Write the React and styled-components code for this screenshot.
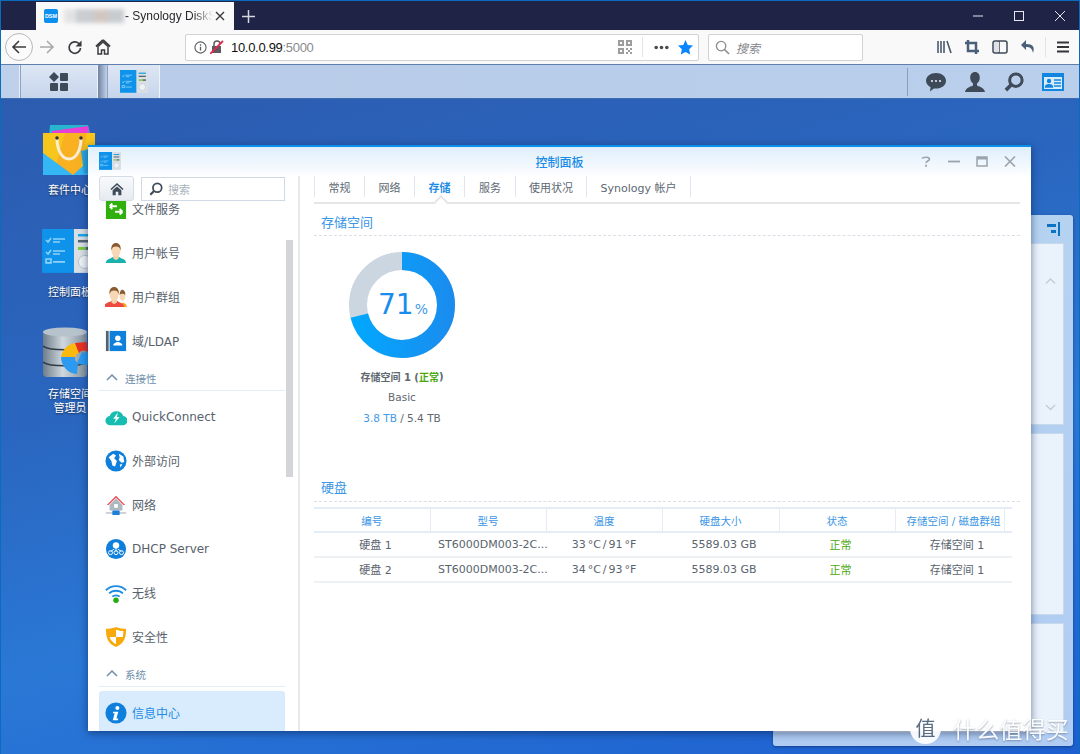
import React from 'react';
import styled, { createGlobalStyle } from 'styled-components';

const UI_FONT = '"DejaVu Sans", "Noto Sans CJK SC", sans-serif';
const CHROME_FONT = '"Liberation Sans", "Noto Sans CJK SC", sans-serif';

const Global = createGlobalStyle`
    html, body { margin: 0; padding: 0; background: #2a64b8; }
    * { box-sizing: border-box; }
`;

const Frame = styled.div`
    width: 1080px;
    height: 754px;
    display: flex;
    flex-direction: column;
    overflow: hidden;
    border: 1px solid #0a6cbd;
    border-bottom: 0;
    font-family: ${UI_FONT};
    position: relative;
`;

/* browser title bar */
const TitleBar = styled.div`
    height: 29px;
    flex: none;
    background: #1f2346;
    display: flex;
    align-items: flex-end;
    padding-left: 35px;
    position: relative;
`;
const BrowserTab = styled.div`
    width: 198px;
    height: 28px;
    background: #f9f9fa;
    display: flex;
    align-items: center;
    padding-left: 8px;
    font-family: ${CHROME_FONT};
    font-size: 12px;
    color: #2a2a2e;
`;
const Favicon = styled.div`
    width: 14px;
    height: 14px;
    border-radius: 2px;
    background: #0c8fee;
    color: #fff;
    font-size: 5.5px;
    font-weight: 700;
    font-family: ${CHROME_FONT};
    display: flex;
    align-items: center;
    justify-content: center;
    flex: none;
`;
const BlurTitle = styled.div`
    width: 60px;
    height: 14px;
    margin-left: 6px;
    flex: none;
    filter: blur(2px);
    background: linear-gradient(90deg, #dfdfe0 0 20%, #c2c6ca 20% 50%, #cbbfb8 50% 75%, #bfc4c8 75% 100%);
    opacity: 0.85;
`;
const TabTitle = styled.div`
    width: 88px;
    margin-left: 1px;
    white-space: nowrap;
    -webkit-mask-image: linear-gradient(90deg, #000 78%, transparent 100%);
    mask-image: linear-gradient(90deg, #000 78%, transparent 100%);
`;
const TabClose = styled.div`
    margin-left: 2px;
    display: flex;
`;
const NewTab = styled.div`
    margin-left: 8px;
    height: 28px;
    display: flex;
    align-items: center;
`;
const WindowButtons = styled.div`
    margin-left: auto;
    height: 28px;
    display: flex;
    align-items: center;
    gap: 31px;
    padding-right: 14px;
`;

/* browser toolbar */
const ToolBar = styled.div`
    height: 35px;
    flex: none;
    background: #f9f9fa;
    border-bottom: 1px solid #5f80ad;
    display: flex;
    align-items: center;
    padding-left: 4px;
`;
const BackButton = styled.div`
    width: 28px;
    height: 28px;
    border-radius: 50%;
    border: 1px solid #b8b8ba;
    background: #fbfbfb;
    display: flex;
    align-items: center;
    justify-content: center;
    flex: none;
`;
const NavIcon = styled.div`
    width: 28px;
    flex: none;
    display: flex;
    align-items: center;
    justify-content: center;
`;
const NavGroup = styled.div`
    display: flex;
    align-items: center;
    width: 180px;
    flex: none;
`;
const UrlBar = styled.div`
    width: 514px;
    height: 27px;
    flex: none;
    background: #fff;
    border: 1px solid #d2d2d4;
    border-radius: 2px;
    display: flex;
    align-items: center;
    padding: 0 5px 0 8px;
    font-family: ${CHROME_FONT};
    font-size: 13px;
    color: #111;
`;
const UrlText = styled.span`
    margin-left: 7px;
    letter-spacing: -0.3px;
`;
const UrlPort = styled.span`
    color: #8b8b8d;
`;
const UrlTools = styled.div`
    margin-left: auto;
    display: flex;
    align-items: center;
    height: 100%;
`;
const ToolDivider = styled.div`
    width: 1px;
    height: 20px;
    background: #e3e3e4;
    margin: 0 ${props => props.$space || 10}px;
`;
const SearchBar = styled.div`
    width: 155px;
    height: 27px;
    margin-left: 9px;
    flex: none;
    background: #fff;
    border: 1px solid #d2d2d4;
    border-radius: 2px;
    display: flex;
    align-items: center;
    padding-left: 6px;
    gap: 6px;
    font-family: ${CHROME_FONT};
    font-size: 12px;
    font-style: italic;
    color: #85858a;
`;
const RightTools = styled.div`
    margin-left: auto;
    display: flex;
    align-items: center;
    gap: 9px;
    padding-right: 9px;
`;

/* DSM task bar */
const TaskBar = styled.div`
    height: 34px;
    flex: none;
    background: linear-gradient(90deg, #b8cbe8, #b9cfeb);
    border-bottom: 1px solid #3f6cae;
    display: flex;
    align-items: stretch;
`;
const TaskStub = styled.div`
    width: 19px;
    background: #bfd0ea;
    border-right: 1px solid #e6edf7;
`;
const TaskButton = styled.div`
    width: ${props => props.$w}px;
    background: linear-gradient(180deg, #dde6f4, #c6d5ec);
    border-left: 1px solid #8da3c4;
    border-right: 1px solid #eef3fa;
    display: flex;
    align-items: center;
    justify-content: center;
`;
const TaskGap = styled.div`
    width: 9px;
    background: linear-gradient(90deg, #6f83a3, #c2d1e8);
`;
const TaskTools = styled.div`
    margin-left: auto;
    display: flex;
    align-items: center;
    padding-right: 7px;
`;
const TaskDivider = styled.div`
    width: 1px;
    height: 28px;
    background: #8b9db8;
    margin-right: 8px;
`;
const TaskIcon = styled.div`
    width: 39px;
    display: flex;
    justify-content: center;
`;

/* desktop */
const Desktop = styled.div`
    flex: 1;
    position: relative;
    background: linear-gradient(165deg, #2c5cb0 0%, #2a66bf 35%, #2a78d6 62%, #1d5fd0 100%);
    overflow: hidden;
`;
const ShortcutColumn = styled.div`
    display: flex;
    flex-direction: column;
    width: 60px;
    margin: 24px 0 0 38px;
`;
const Shortcut = styled.div`
    height: 102px;
    display: flex;
    flex-direction: column;
    align-items: center;
`;
const ShortcutArt = styled.div`
    height: 54px;
    width: 60px;
    padding-left: ${props => props.$shift || 0}px;
    display: flex;
    align-items: center;
    justify-content: center;
    flex: none;
`;
const ShortcutLabel = styled.div`
    margin-top: 6px;
    padding-left: 2px;
    font-family: ${CHROME_FONT};
    font-size: 11px;
    line-height: 14px;
    color: #fff;
    text-align: center;
    white-space: nowrap;
    text-shadow: 0 1px 2px rgba(0, 0, 0, 0.6);
`;

const BackWidget = styled.div`
    position: absolute;
    left: 772px;
    top: 116px;
    width: 300px;
    height: 531px;
    background: linear-gradient(180deg, #b5d2f1, #b0ccf2);
    border-radius: 3px;
    box-shadow: 0 1px 3px rgba(10, 40, 100, 0.6);
    display: flex;
    flex-direction: column;
    padding: 0 9px 0 0;
`;
const WidgetHead = styled.div`
    height: 28px;
    flex: none;
    display: flex;
    align-items: center;
    justify-content: flex-end;
    padding: 0 3px 0 0;
`;
const WidgetPanel = styled.div`
    height: ${props => props.$h}px;
    flex: none;
    margin-bottom: 8px;
    background: #eaf2fc;
    border: 1px solid #c9d9ec;
    display: flex;
    flex-direction: column;
    justify-content: space-between;
    align-items: flex-end;
    padding: 34px 7px 13px 0;
`;

/* control panel window */
const PanelWindow = styled.div`
    position: absolute;
    left: 87px;
    top: 46px;
    width: 943px;
    height: 586px;
    background: #fff;
    border-top: 2px solid #0a90ea;
    box-shadow: 0 2px 8px rgba(5, 25, 70, 0.55);
    display: flex;
    flex-direction: column;
`;
const WindowHead = styled.div`
    height: 29px;
    flex: none;
    background: linear-gradient(180deg, #dfeefb, #fdfeff);
    display: grid;
    grid-template-columns: 1fr auto 1fr;
    align-items: center;
    padding: 0 11px;
`;
const WindowName = styled.div`
    font-family: "Noto Sans CJK SC", sans-serif;
    font-size: 12px;
    font-weight: 500;
    color: #1a8ce8;
`;
const WindowControls = styled.div`
    display: flex;
    justify-content: flex-end;
    align-items: center;
    gap: 16px;
    padding-right: 4px;
`;
const WindowBody = styled.div`
    flex: 1;
    display: flex;
    min-height: 0;
`;

const Sidebar = styled.div`
    width: 212px;
    flex: none;
    border-right: 2px solid #e9e9ea;
    display: flex;
    flex-direction: column;
    position: relative;
`;
const SideTop = styled.div`
    height: 25px;
    flex: none;
    display: flex;
    gap: 7px;
    padding-left: 11px;
    position: relative;
    z-index: 1;
    background: #fff;
`;
const HomeButton = styled.div`
    width: 35px;
    height: 25px;
    border: 1px solid #d4dce6;
    border-radius: 3px;
    background: linear-gradient(180deg, #f8fafc, #e6ebf1);
    display: flex;
    align-items: center;
    justify-content: center;
`;
const SideSearch = styled.div`
    width: 144px;
    height: 24px;
    margin-top: 1px;
    border: 1px solid #cfd9e6;
    display: flex;
    align-items: center;
    gap: 5px;
    padding-left: 7px;
    font-size: 11px;
    font-family: "Noto Sans CJK SC", sans-serif;
    color: #a9b2bb;
`;
const SideList = styled.div`
    flex: 1;
    overflow: hidden;
    padding: 0 13px 0 11px;
`;
const SideRow = styled.div`
    height: 44px;
    display: flex;
    align-items: center;
    gap: 5px;
    padding-left: 6px;
    font-size: 12px;
    color: ${props => (props.$active ? '#1f8ce6' : '#58626c')};
    background: ${props => (props.$active ? '#d8ecfd' : 'transparent')};
    border-radius: ${props => (props.$active ? '3px' : '0')};
    margin-top: ${props => props.$offset || 0}px;
`;
const RowLabel = styled.span`
    padding-bottom: ${props => (props.$latin ? 0 : 2)}px;
`;
const SideGroup = styled.div`
    height: 28px;
    margin-bottom: 4px;
    border-bottom: 1px solid #e6edf4;
    display: flex;
    align-items: center;
    gap: 7px;
    padding: 3px 0 0 7px;
    font-size: 10.5px;
    color: #6d8da8;
`;
const ScrollThumb = styled.div`
    position: absolute;
    right: 5px;
    top: 64px;
    width: 7px;
    height: 237px;
    background: #d3d5d8;
`;

const Main = styled.div`
    flex: 1;
    min-width: 0;
    padding: 0 11px 0 14px;
    display: flex;
    flex-direction: column;
`;
const Tabs = styled.div`
    height: 28px;
    flex: none;
    display: flex;
    border-bottom: 2px solid #e4e6e8;
    padding-bottom: 5px;
    position: relative;
`;
const TabItem = styled.div`
    width: ${props => props.$w}px;
    flex: none;
    border-left: 1px solid #dfe6ee;
    border-right: ${props => (props.$last ? '1px solid #dfe6ee' : '0')};
    display: flex;
    align-items: center;
    justify-content: center;
    font-size: 11px;
    color: ${props => (props.$active ? '#1f8ce6' : '#5d6872')};
    font-weight: ${props => (props.$active ? 700 : 400)};
    white-space: nowrap;
    position: relative;
    &::after {
        content: '';
        display: ${props => (props.$active ? 'block' : 'none')};
        position: absolute;
        left: 50%;
        bottom: -10px;
        width: 8px;
        height: 8px;
        margin-left: -4px;
        background: #fff;
        border-left: 2px solid #e4e6e8;
        border-top: 2px solid #e4e6e8;
        transform: rotate(45deg);
    }
`;
const SectionTitle = styled.div`
    height: ${props => props.$h}px;
    margin-top: ${props => props.$top || 0}px;
    padding: ${props => props.$pt || 0}px 0 ${props => props.$pb || 0}px 7px;
    flex: none;
    display: flex;
    align-items: center;
    font-size: 13px;
    color: #3b96e6;
    border-bottom: 1px dashed #d9dfe6;
`;
const VolumeCard = styled.div`
    width: 176px;
    margin-top: 16px;
    display: flex;
    flex-direction: column;
    align-items: center;
`;
const Donut = styled.div`
    width: 106px;
    height: 106px;
    display: grid;
    place-items: center;
    margin-bottom: 8px;
    & > * { grid-area: 1 / 1; }
`;
const DonutValue = styled.div`
    display: flex;
    align-items: baseline;
    color: #1a8cec;
    font-size: 28px;
    padding: 0 0 2px 2px;
`;
const DonutUnit = styled.span`
    font-size: 14px;
    margin-left: 1px;
    color: #3f9ae8;
`;
const VolumeLine = styled.div`
    height: 21px;
    display: flex;
    align-items: center;
    white-space: pre;
    padding-bottom: 1px;
    font-size: ${props => (props.$bold ? 10 : 10.5)}px;
    font-weight: ${props => (props.$bold ? 700 : 400)};
    color: #5e6871;
`;
const Green = styled.span`
    color: #4aa80e;
`;
const Used = styled.span`
    color: #3f9ae8;
`;
const DiskTable = styled.table`
    width: 698px;
    margin-top: 5px;
    border-collapse: collapse;
    table-layout: fixed;
    font-size: 11px;
    color: #5a646e;
`;
const HeadCell = styled.th`
    height: 24px;
    padding: 0 0 0 ${props => props.$pad || 0}px;
    font-weight: 400;
    font-size: 10.5px;
    color: #3b96e6;
    border-top: 2px solid #e4ecf5;
    border-bottom: 2px solid #e4ecf5;
    border-right: ${props => (props.$plain ? '0' : '1px solid #e4ecf5')};
    white-space: nowrap;
`;
const BodyCell = styled.td`
    height: 25px;
    padding: 0 0 ${props => (props.$cjk ? 2 : 0)}px ${props => props.$pad ?? 7}px;
    text-align: ${props => (props.$left ? 'left' : 'center')};
    word-spacing: ${props => (props.$tight ? '-1.5px' : '0')};
    border-bottom: 2px solid #eef1f4;
    white-space: nowrap;
`;

const Watermark = styled.div`
    position: absolute;
    right: 10px;
    bottom: 9px;
    display: flex;
    align-items: center;
    gap: 12px;
    color: #fff;
    font-family: "Noto Sans CJK SC", sans-serif;
    font-size: 23px;
    letter-spacing: 0.2px;
    opacity: 0.92;
    text-shadow: 0 1px 2px rgba(60, 80, 110, 0.55);
`;
const WatermarkBadge = styled.div`
    width: 31px;
    height: 31px;
    border-radius: 50%;
    background: #fff;
    color: #4f6278;
    font-size: 20px;
    line-height: 29px;
    text-align: center;
    text-shadow: none;
`;

/* drawings */
const ControlPanelArt = ({ w }) => (
    <svg width={w} height={w * 0.85} viewBox="0 0 54 46">
        <rect x="0" y="0" width="32" height="44" fill="#0f92ea" />
        <rect x="32" y="0" width="22" height="44" fill="#d9dfe3" />
        <g stroke="#8fd2fa" strokeWidth="1.6" fill="none">
            <path d="M4 11l2 2 3-4M11 10h12M11 13h7M4 23l2 2 3-4M11 22h12M11 25h7M4 34h5v-4h-5zM11 33h12" />
        </g>
        <rect x="36" y="5" width="14" height="2.5" fill="#1aa6e8" />
        <rect x="36" y="11" width="14" height="2.5" fill="#566572" />
        <rect x="36" y="18" width="8" height="3" fill="#7ac943" />
        <rect x="44" y="18" width="6" height="3" fill="#566572" />
        <circle cx="43" cy="33" r="6.5" fill="#eef2f5" stroke="#b9c2c9" />
    </svg>
);
const BagArt = () => (
    <svg width="52" height="54" viewBox="0 0 52 54">
        <path d="M7 2l38 0 3 12H6z" fill="#28b6ce" />
        <path d="M9 8l36-5 2 12H8z" fill="#e63fd6" />
        <path d="M0 10h52v42H0z" fill="#f7c51c" />
        <path d="M22 10h22l-8 42H10z" fill="#f9a825" opacity="0.7" />
        <path d="M0 30l30 22H0z" fill="#35b6f5" />
        <path d="M30 52l22-20v20z" fill="#35b6f5" />
        <path d="M14 15c0 28 24 28 24 0" fill="none" stroke="#fbeed2" strokeWidth="3" />
        <circle cx="14" cy="15" r="1.8" fill="#333" />
        <circle cx="38" cy="15" r="1.8" fill="#333" />
        <path d="M38 28l12-3 2 24-11 1z" fill="#2aa7df" />
    </svg>
);
const StorageArt = () => (
    <svg width="56" height="54" viewBox="0 0 56 54">
        <defs>
            <linearGradient id="silver" x1="0" x2="1" y1="0" y2="0">
                <stop offset="0" stopColor="#6f7d8a" />
                <stop offset="0.45" stopColor="#cfd8de" />
                <stop offset="1" stopColor="#7f8d99" />
            </linearGradient>
        </defs>
        <rect x="0" y="4" width="44" height="46" rx="4" fill="url(#silver)" />
        <ellipse cx="22" cy="5" rx="22" ry="4.5" fill="#b7c3cc" />
        <path d="M0 19c6 5 38 5 44 0M0 35c6 5 38 5 44 0" stroke="#2f3a44" strokeWidth="1.6" fill="none" />
        <path d="M34 36a17 17 0 0 0 20 -3l-9-9a5 5 0 0 1-6 1z" fill="#2b9af0" />
        <path d="M18 30a17 17 0 0 1 14-14l4 10a6 6 0 0 0-4 4z" fill="#fbb80f" />
        <path d="M32 16l12-1 1 10a6 6 0 0 0-9 1z" fill="#e8321f" />
        <path d="M18 30h14a6 6 0 0 0 3 6l-1 11a17 17 0 0 1-16-17z" fill="#2b9af0" />
    </svg>
);
const Glyph = ({ children, w = 22, h = 22, box = '0 0 24 24' }) => (
    <svg width={w} height={h} viewBox={box} style={{ flex: 'none' }}>{children}</svg>
);
const Person = ({ body, x = 0 }) => (
    <g transform={`translate(${x} 0)`}>
        <path d="M1 23c0-5 6-5 8-7h6c2 2 8 2 8 7z" fill={body} />
        <path d="M9 14h6v4l-3 2-3-2z" fill="#f5cfa8" />
        <ellipse cx="12" cy="9" rx="5" ry="7" fill="#f8d7b5" />
        <path d="M7 9c-1-6 3-8 5-8s6 2 5 8c-1-3-2-4-5-4s-4 1-5 4z" fill="#8a5a32" />
    </g>
);
const icons = {
    file: (
        <Glyph>
            <rect x="1" y="1" width="22" height="22" rx="1" fill="#2fb00d" />
            <path d="M5 9h8M5 9l3-3M5 9l3 3M19 15h-8M19 15l-3-3M19 15l-3 3" stroke="#fff" strokeWidth="2" fill="none" />
        </Glyph>
    ),
    user: <Glyph><Person body="#18b1ad" /></Glyph>,
    group: (
        <Glyph>
            <path d="M17 23c0-3 1-4 3-5l3 2 1 3z" fill="#f7a823" />
            <ellipse cx="19" cy="11" rx="3" ry="5" fill="#f8d7b5" />
            <path d="M16 10c0-5 2-6 3-6s4 2 3 6c-1-2-5-2-6 0z" fill="#8a5a32" />
            <Person body="#ee4b3e" x="-2" />
        </Glyph>
    ),
    ldap: (
        <Glyph>
            <rect x="1" y="1" width="3" height="22" fill="#56616d" />
            <rect x="5" y="1" width="18" height="22" fill="#0f7fdc" />
            <circle cx="14" cy="9" r="3" fill="#fff" />
            <path d="M9 17c0-3 3-3 4-4h2c1 1 4 1 4 4z" fill="#fff" />
        </Glyph>
    ),
    quick: (
        <Glyph>
            <path d="M6 21a5 5 0 0 1-1-10 8 8 0 0 1 15 0 5 5 0 0 1-1 10z" fill="#17bdb0" />
            <path d="M14 7l-5 7h3l-2 5 6-7h-3z" fill="#fff" />
        </Glyph>
    ),
    globe: (
        <Glyph>
            <circle cx="12" cy="12" r="11.5" fill="#0f7fdc" />
            <path d="M4 8l5-4 3 2-2 3 3 3-2 6-3-1-1-5zM15 4l5 3 1 6-3 1-3-3 1-3zM16 16l3-1-2 4z" fill="#fff" />
        </Glyph>
    ),
    network: (
        <Glyph>
            <path d="M12 2L2 12h2l8-8 8 8h2z" fill="#ee4b55" />
            <path d="M5 12l7-7 7 7v6H5z" fill="#aeb8c2" />
            <rect x="10" y="11" width="4" height="4" fill="#fff" />
            <rect x="1" y="20" width="22" height="1.4" fill="#aeb8c2" />
            <rect x="8" y="18" width="8" height="5" rx="1" fill="#1b7fd8" />
        </Glyph>
    ),
    dhcp: (
        <Glyph>
            <circle cx="12" cy="12" r="11" fill="#0f7fdc" />
            <circle cx="12" cy="8" r="3.5" fill="#fff" />
            <path d="M12 10v5M6 15l4-3M18 15l-4-3" stroke="#fff" strokeWidth="1" />
            <g fill="none" stroke="#fff" strokeWidth="1">
                <circle cx="6" cy="16" r="2.2" />
                <circle cx="12" cy="16" r="2.2" />
                <circle cx="18" cy="16" r="2.2" />
            </g>
        </Glyph>
    ),
    wifi: (
        <Glyph>
            <g fill="none" stroke="#1b8ce6" strokeWidth="2">
                <path d="M1 9c6-6 16-6 22 0M4.5 12.5c4-4 11-4 15 0M8 16c2-2 6-2 8 0" />
            </g>
            <circle cx="12" cy="20" r="3" fill="#1faf0e" />
        </Glyph>
    ),
    shield: (
        <Glyph>
            <path d="M1 3c4 0 9-1 11-2 2 1 7 2 11 2 0 10-2 16-11 20C3 19 1 13 1 3z" fill="#f7a90c" />
            <path d="M12 4c3 1 5 1.500 8 1.500 0 2-.2 4-.5 6.500H12zM12 12v8c-3-2-6-4-7-8z" fill="#fff" />
        </Glyph>
    ),
    info: (
        <Glyph>
            <circle cx="12" cy="12" r="11.500" fill="#0f7fdc" />
            <circle cx="13.500" cy="6.500" r="2.200" fill="#fff" />
            <path d="M9 10.500h5.500l-2 7.500h2l-.5 1.800H8.500l2-7.500H8.500z" fill="#fff" />
        </Glyph>
    ),
};
const Chevron = ({ up = true, color = '#6d8da8', w = 12 }) => (
    <svg width={w} height={w * 0.6} viewBox="0 0 12 7">
        <path d={up ? 'M1 6l5-5 5 5' : 'M1 1l5 5 5-5'} fill="none" stroke={color} strokeWidth="1.500" />
    </svg>
);
const Magnifier = ({ size = 14, color = '#3f4b58', sw = 2 }) => (
    <svg width={size} height={size} viewBox="0 0 16 16">
        <circle cx="9.500" cy="6.500" r="5" fill="none" stroke={color} strokeWidth={sw} />
        <path d="M6 10l-4.500 4.500" stroke={color} strokeWidth={sw + 0.5} />
    </svg>
);
const HomeGlyph = ({ size = 14, color = '#3f4b58' }) => (
    <svg width={size} height={size} viewBox="0 0 16 16">
        <path d="M8 1L0.500 8l1.200 1.200L8 3.400l6.300 5.800L15.500 8z" fill={color} />
        <path d="M3 9.500L8 5l5 4.500V15H9.500v-4h-3v4H3z" fill={color} />
    </svg>
);

const menu = [
    { icon: 'file', label: '文件服务', offset: -14 },
    { icon: 'user', label: '用户帐号' },
    { icon: 'group', label: '用户群组' },
    { icon: 'ldap', label: '域/LDAP' },
    { group: '连接性' },
    { icon: 'quick', label: 'QuickConnect', latin: true },
    { icon: 'globe', label: '外部访问' },
    { icon: 'network', label: '网络' },
    { icon: 'dhcp', label: 'DHCP Server', latin: true },
    { icon: 'wifi', label: '无线' },
    { icon: 'shield', label: '安全性' },
    { group: '系统' },
    { icon: 'info', label: '信息中心', active: true },
];
const tabs = [
    { label: '常规', w: 50 },
    { label: '网络', w: 50 },
    { label: '存储', w: 50, active: true },
    { label: '服务', w: 51 },
    { label: '使用状况', w: 71 },
    { label: 'Synology 帐户', w: 105, last: true },
];
const columns = [
    { label: '编号', w: 116 },
    { label: '型号', w: 116 },
    { label: '温度', w: 116 },
    { label: '硬盘大小', w: 117 },
    { label: '状态', w: 116 },
    { label: '存储空间 / 磁盘群组', w: 109, pad: 8 },
    { label: '', w: 8, plain: true },
];
const disks = [
    ['硬盘 1', '33 °C / 91 °F'],
    ['硬盘 2', '34 °C / 93 °F'],
];

const App = () => (
    <Frame>
        <Global />
        <TitleBar>
            <BrowserTab>
                <Favicon>DSM</Favicon>
                <BlurTitle />
                <TabTitle>- Synology DiskS</TabTitle>
                <TabClose>
                    <svg width="10" height="10" viewBox="0 0 10 10"><path d="M1 1l8 8M9 1l-8 8" stroke="#3a3a40" strokeWidth="1.400" /></svg>
                </TabClose>
            </BrowserTab>
            <NewTab>
                <svg width="13" height="13" viewBox="0 0 13 13"><path d="M6.500 0v13M0 6.500h13" stroke="#d5d6de" strokeWidth="1.500" /></svg>
            </NewTab>
            <WindowButtons>
                <svg width="10" height="10" viewBox="0 0 10 10"><path d="M0 5h10" stroke="#e8e8ee" /></svg>
                <svg width="10" height="10" viewBox="0 0 10 10"><rect x="0.500" y="0.500" width="9" height="9" fill="none" stroke="#e8e8ee" /></svg>
                <svg width="10" height="10" viewBox="0 0 10 10"><path d="M0 0l10 10M10 0L0 10" stroke="#e8e8ee" /></svg>
            </WindowButtons>
        </TitleBar>
        <ToolBar>
            <NavGroup>
                <BackButton>
                    <svg width="16" height="16" viewBox="0 0 16 16"><path d="M15 8H2M8 2L2 8l6 6" fill="none" stroke="#3c3c40" strokeWidth="1.600" /></svg>
                </BackButton>
                <NavIcon>
                    <svg width="16" height="16" viewBox="0 0 16 16"><path d="M1 8h13M8 2l6 6-6 6" fill="none" stroke="#a9a9ac" strokeWidth="1.600" /></svg>
                </NavIcon>
                <NavIcon>
                    <svg width="16" height="16" viewBox="0 0 16 16"><path d="M13.500 9a5.700 5.700 0 1 1-1.700-4.500L14 6.500" fill="none" stroke="#3c3c40" strokeWidth="1.700" /><path d="M14.500 1.500v6h-6z" fill="#3c3c40" /></svg>
                </NavIcon>
                <NavIcon>
                    <svg width="16" height="16" viewBox="0 0 16 16"><path d="M8 1L1 7.500M8 1l7 6.500" stroke="#3c3c40" strokeWidth="1.800" fill="none" /><path d="M3 7.500V15h3.500v-4h3v4H13V7.500L8 3z" fill="none" stroke="#3c3c40" strokeWidth="1.500" /></svg>
                </NavIcon>
            </NavGroup>
            <UrlBar>
                <svg width="13" height="13" viewBox="0 0 14 14"><circle cx="7" cy="7" r="6" fill="none" stroke="#5b5b60" strokeWidth="1.200" /><path d="M7 6.300v4M7 3.500v1.500" stroke="#5b5b60" strokeWidth="1.400" /></svg>
                <svg width="14" height="14" viewBox="0 0 14 14" style={{ marginLeft: 3 }}><rect x="2" y="6" width="9" height="7" fill="#5b5b60" /><path d="M4 6V4a3 3 0 0 1 6 0" fill="none" stroke="#5b5b60" strokeWidth="1.500" /><path d="M0 14L13 1" stroke="#e22850" strokeWidth="1.800" /></svg>
                <UrlText>10.0.0.99<UrlPort>:5000</UrlPort></UrlText>
                <UrlTools>
                    <svg width="14" height="14" viewBox="0 0 14 14"><g fill="#9d9d9f"><path d="M0 0h6v6H0zM2 2v2h2V2zM8 0h6v6H8zM10 2v2h2V2zM0 8h6v6H0zM2 10v2h2v-2z" fillRule="evenodd" /><path d="M8 8h2v2H8zM12 8h2v2h-2zM10 10h2v2h-2zM8 12h2v2H8zM12 12h2v2h-2z" /></g></svg>
                    <ToolDivider $space={10} />
                    <svg width="15" height="5" viewBox="0 0 15 5" style={{ marginLeft: 1 }}><g fill="#4a4a4f"><circle cx="2.200" cy="2.500" r="1.800" /><circle cx="7.500" cy="2.500" r="1.800" /><circle cx="12.800" cy="2.500" r="1.800" /></g></svg>
                    <svg width="15" height="15" viewBox="0 0 16 16" style={{ marginLeft: 9 }}><path d="M8 0l2.400 5.200 5.600.7-4.100 3.900 1.100 5.700L8 12.700l-5 2.800 1.100-5.700L0 5.900l5.600-.7z" fill="#0a84ff" /></svg>
                </UrlTools>
            </UrlBar>
            <SearchBar>
                <svg width="15" height="15" viewBox="0 0 16 16"><circle cx="6.500" cy="6.500" r="5" fill="none" stroke="#8b8b8f" strokeWidth="1.400" /><path d="M10 10l5 5" stroke="#8b8b8f" strokeWidth="1.600" /></svg>
                <span>搜索</span>
            </SearchBar>
            <RightTools>
                <svg width="15" height="14" viewBox="0 0 15 14"><path d="M1 1v12M4 1v12M7 1v12M10 1l4 12" stroke="#4a5a6e" strokeWidth="1.600" fill="none" /></svg>
                <svg width="16" height="16" viewBox="0 0 16 16" style={{ marginLeft: 3 }}><path d="M4 1v11h11M1 4h11v11" fill="none" stroke="#4a5f78" strokeWidth="2.500" /></svg>
                <svg width="16" height="14" viewBox="0 0 16 14" style={{ marginLeft: 3 }}><rect x="1" y="1" width="14" height="12" rx="2" fill="none" stroke="#3e4a58" strokeWidth="1.500" /><path d="M7 1v12" stroke="#3e4a58" strokeWidth="1.500" /><path d="M2 2h5v10H2z" fill="#dfe3e8" /></svg>
                <svg width="14" height="14" viewBox="0 0 14 14" style={{ marginLeft: 4 }}><path d="M5 0L0 5l5 5V7c4 0 6 1 7 6 2-6 0-9-7-9z" fill="#4a5f78" /></svg>
                <ToolDivider $space={1} />
                <svg width="14" height="12" viewBox="0 0 14 12"><path d="M1 1.500h12M1 6h12M1 10.500h12" stroke="#35353a" strokeWidth="1.800" /></svg>
            </RightTools>
        </ToolBar>
        <TaskBar>
            <TaskStub />
            <TaskButton $w={78}>
                <svg width="20" height="20" viewBox="0 0 20 20"><g fill="#3f4a58"><path d="M5 0l5 5-5 5-5-5z" /><rect x="11" y="1" width="8" height="8" rx="1" /><rect x="1" y="11" width="8" height="8" rx="1" /><rect x="11" y="11" width="8" height="8" rx="1" /></g></svg>
            </TaskButton>
            <TaskGap />
            <TaskButton $w={53}><ControlPanelArt w={28} /></TaskButton>
            <TaskTools>
                <TaskDivider />
                <TaskIcon>
                    <svg width="20" height="20" viewBox="0 0 20 20"><path d="M10 1c5.500 0 10 3.200 10 7.800s-4.500 7.800-10 7.800c-.8 0-1.500 0-2.200-.2L4 19.500l.6-4.200C2 14 0 11.600 0 8.800 0 4.200 4.500 1 10 1z" fill="#3f4a58" /><g fill="#dfe7f2"><circle cx="6" cy="9" r="1.100" /><circle cx="10" cy="9" r="1.100" /><circle cx="14" cy="9" r="1.100" /></g></svg>
                </TaskIcon>
                <TaskIcon>
                    <svg width="20" height="20" viewBox="0 0 20 20"><path d="M10 0c3 0 4.800 2.400 4.800 5.500 0 2.500-1 4.700-2.800 6v2c1 .8 7 1.500 8 6.500H0c1-5 7-5.700 8-6.500v-2C6.200 10.200 5.200 8 5.200 5.500 5.200 2.400 7 0 10 0z" fill="#3f4a58" /></svg>
                </TaskIcon>
                <TaskIcon><Magnifier size={20} sw={2.400} /></TaskIcon>
                <TaskIcon>
                    <svg width="22" height="18" viewBox="0 0 22 18"><rect width="22" height="18" fill="#1186e0" /><rect x="2" y="4" width="18" height="12" fill="#d9ecfa" /><circle cx="7" cy="8" r="2.200" fill="#1186e0" /><path d="M3.500 14c0-3 7-3 7 0zM12 7h7M12 10h7M12 13h7" fill="#1186e0" stroke="#1186e0" strokeWidth="1.400" /></svg>
                </TaskIcon>
            </TaskTools>
        </TaskBar>
        <Desktop>
            <ShortcutColumn>
                <Shortcut>
                    <ShortcutArt><BagArt /></ShortcutArt>
                    <ShortcutLabel>套件中心</ShortcutLabel>
                </Shortcut>
                <Shortcut>
                    <ShortcutArt><ControlPanelArt w={54} /></ShortcutArt>
                    <ShortcutLabel>控制面板</ShortcutLabel>
                </Shortcut>
                <Shortcut>
                    <ShortcutArt $shift={4}><StorageArt /></ShortcutArt>
                    <ShortcutLabel>存储空间<br />管理员</ShortcutLabel>
                </Shortcut>
            </ShortcutColumn>
            <BackWidget>
                <WidgetHead>
                    <svg width="14" height="14" viewBox="0 0 14 14"><path d="M0 2h9v3H0zM4 8h5v3H4z" fill="#0b72c4" /><rect x="11" y="0" width="2" height="14" fill="#0b72c4" /></svg>
                </WidgetHead>
                <WidgetPanel $h={182}>
                    <Chevron color="#c4ccd6" w={11} />
                    <Chevron up={false} color="#c4ccd6" w={11} />
                </WidgetPanel>
                <WidgetPanel $h={182} />
                <WidgetPanel $h={110} />
            </BackWidget>
            <PanelWindow>
                <WindowHead>
                    <ControlPanelArt w={22} />
                    <WindowName>控制面板</WindowName>
                    <WindowControls>
                        <svg width="12" height="11" viewBox="0 0 12 11"><path d="M2 2.500C3 1 9 .5 9.500 3c.3 2-3.500 2-3.500 4M6 8.500V11" fill="none" stroke="#9aa3ab" strokeWidth="1.500" /></svg>
                        <svg width="12" height="11" viewBox="0 0 12 11"><path d="M0 5.500h12" stroke="#9aa3ab" strokeWidth="1.800" /></svg>
                        <svg width="12" height="11" viewBox="0 0 12 11"><rect x="1" y="1" width="10" height="9" fill="none" stroke="#9aa3ab" strokeWidth="1.500" /><rect x="1" y="1" width="10" height="2.500" fill="#9aa3ab" /></svg>
                        <svg width="12" height="11" viewBox="0 0 12 11"><path d="M1 .5l10 10M11 .5l-10 10" stroke="#9aa3ab" strokeWidth="1.600" /></svg>
                    </WindowControls>
                </WindowHead>
                <WindowBody>
                    <Sidebar>
                        <SideTop>
                            <HomeButton><HomeGlyph /></HomeButton>
                            <SideSearch>
                                <Magnifier size={14} />
                                搜索
                            </SideSearch>
                        </SideTop>
                        <SideList>
                            {menu.map(item => item.group ? (
                                <SideGroup key={item.group}>
                                    <Chevron />
                                    {item.group}
                                </SideGroup>
                            ) : (
                                <SideRow key={item.label} $active={item.active} $offset={item.offset}>
                                    {icons[item.icon]}
                                    <RowLabel $latin={item.latin}>{item.label}</RowLabel>
                                </SideRow>
                            ))}
                        </SideList>
                        <ScrollThumb />
                    </Sidebar>
                    <Main>
                        <Tabs>
                            {tabs.map(tab => (
                                <TabItem key={tab.label} $w={tab.w} $active={tab.active} $last={tab.last}>{tab.label}</TabItem>
                            ))}
                        </Tabs>
                        <SectionTitle $h={32} $pt={4}>存储空间</SectionTitle>
                        <VolumeCard>
                            <Donut>
                                <svg width="106" height="106" viewBox="0 0 106 106">
                                    <defs>
                                        <linearGradient id="ring" gradientUnits="userSpaceOnUse" x1="0" y1="0" x2="0" y2="106">
                                            <stop offset="0" stopColor="#00a9ff" />
                                            <stop offset="1" stopColor="#1b8bee" />
                                        </linearGradient>
                                    </defs>
                                    <circle cx="53" cy="53" r="44" fill="none" stroke="#ccd6e0" strokeWidth="18" />
                                    <circle
                                        cx="53"
                                        cy="53"
                                        r="44"
                                        fill="none"
                                        stroke="url(#ring)"
                                        strokeWidth="18"
                                        strokeDasharray={`${2 * Math.PI * 44 * 0.71} ${2 * Math.PI * 44}`}
                                        transform="rotate(-90 53 53)"
                                    />
                                </svg>
                                <DonutValue>71<DonutUnit>%</DonutUnit></DonutValue>
                            </Donut>
                            <VolumeLine $bold>存储空间 1 (<Green>正常</Green>)</VolumeLine>
                            <VolumeLine>Basic</VolumeLine>
                            <VolumeLine><Used>3.8 TB</Used> / 5.4 TB</VolumeLine>
                        </VolumeCard>
                        <SectionTitle $h={25} $top={48} $pb={5}>硬盘</SectionTitle>
                        <DiskTable>
                            <colgroup>
                                {columns.map((col, i) => <col key={i} style={{ width: col.w }} />)}
                            </colgroup>
                            <thead>
                                <tr>
                                    {columns.map((col, i) => <HeadCell key={i} $plain={col.plain} $pad={col.pad}>{col.label}</HeadCell>)}
                                </tr>
                            </thead>
                            <tbody>
                                {disks.map(disk => (
                                    <tr key={disk[0]}>
                                        <BodyCell $cjk>{disk[0]}</BodyCell>
                                        <BodyCell $left $pad={8}>ST6000DM003-2C...</BodyCell>
                                        <BodyCell $pad={0} $tight>{disk[1]}</BodyCell>
                                        <BodyCell>5589.03 GB</BodyCell>
                                        <BodyCell $cjk><Green>正常</Green></BodyCell>
                                        <BodyCell $cjk colSpan={2}>存储空间 1</BodyCell>
                                    </tr>
                                ))}
                            </tbody>
                        </DiskTable>
                    </Main>
                </WindowBody>
            </PanelWindow>
        </Desktop>
        <Watermark>
            <WatermarkBadge>值</WatermarkBadge>
            什么值得买
        </Watermark>
    </Frame>
);

export default App;
